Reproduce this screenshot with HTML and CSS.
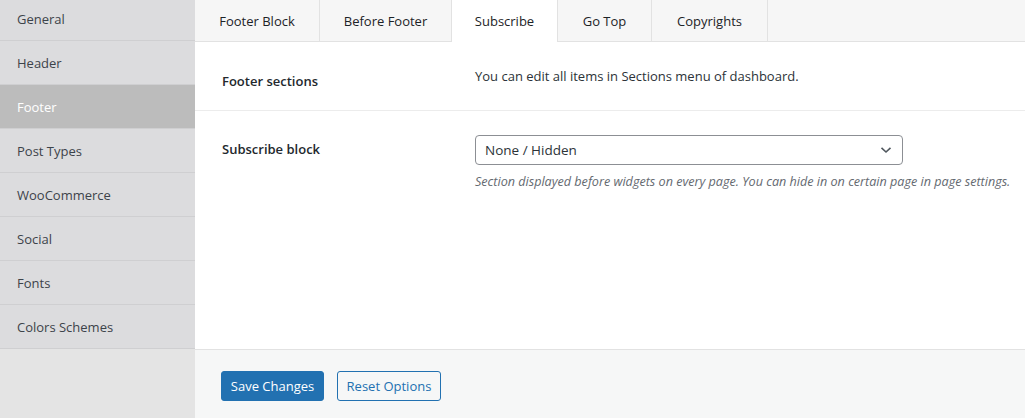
FILE: index.html
```html
<!DOCTYPE html>
<html>
<head>
<meta charset="utf-8">
<link rel="stylesheet" href="styles.css">
</head>
<body>
<div class="wrap">
  <aside class="sidebar">
    <ul class="menu">
      <li class="item first">General</li>
      <li class="item">Header</li>
      <li class="item active">Footer</li>
      <li class="item">Post Types</li>
      <li class="item">WooCommerce</li>
      <li class="item">Social</li>
      <li class="item">Fonts</li>
      <li class="item">Colors Schemes</li>
    </ul>
  </aside>
  <main class="main">
    <nav class="tabs">
      <div class="tab">Footer Block</div>
      <div class="tab">Before Footer</div>
      <div class="tab active">Subscribe</div>
      <div class="tab">Go Top</div>
      <div class="tab">Copyrights</div>
    </nav>
    <section class="content">
      <div class="row row-info">
        <div class="label label-info">Footer sections</div>
        <div class="value">You can edit all items in Sections menu of dashboard.</div>
      </div>
      <div class="row row-field">
        <div class="label label-field">Subscribe block</div>
        <div class="value">
          <div class="select">
            <span>None / Hidden</span>
            <svg class="chev" width="12" height="8" viewBox="0 0 12 8"><path d="M1.5 1.8 L6 6 L10.5 1.8" fill="none" stroke="#50575e" stroke-width="1.6"/></svg>
          </div>
          <p class="desc">Section displayed before widgets on every page. You can hide in on certain page in page settings.</p>
        </div>
      </div>
    </section>
    <footer class="actions">
      <button class="btn primary">Save Changes</button>
      <button class="btn secondary">Reset Options</button>
    </footer>
  </main>
</div>
</body>
</html>
```

FILE: styles.css
```css
* { box-sizing: border-box; }
html, body { margin: 0; padding: 0; }
body {
  font-family: "Open Sans", "Noto Sans", sans-serif;
  font-size: 13px;
  color: #1d2327;
  background: #e4e4e4;
  width: 1025px;
  height: 418px;
  overflow: hidden;
  white-space: nowrap;
}
.wrap { display: flex; height: 418px; }
.sidebar {
  width: 195px;
  flex: none;
  background: #e4e4e4;
}
.menu { list-style: none; margin: -2px 0 0; padding: 0; }
.item {
  height: 44px;
  display: flex;
  align-items: center;
  padding-left: 17px;
  background: #dcdcde;
  border-bottom: 1px solid #cfcfd1;
  color: #3c434a;
}
.item.first { height: 43px; }
.item.active { background: #bcbcbc; color: #fff; }
.main {
  flex: 1;
  display: flex;
  flex-direction: column;
  background: #fff;
}
.tabs {
  display: flex;
  height: 42px;
  background: #f6f6f6;
  border-bottom: 1px solid #e2e2e2;
}
.tab {
  height: 41px;
  display: flex;
  align-items: center;
  justify-content: center;
  border-right: 1px solid #e2e2e2;
  color: #1d2327;
}
.tab:nth-child(1) { width: 125px; }
.tab:nth-child(2) { width: 132px; }
.tab:nth-child(3) { width: 106px; }
.tab:nth-child(4) { width: 94px; }
.tab:nth-child(5) { width: 116px; }
.tab.active { background: #fff; height: 42px; margin-bottom: -1px; }
.content { flex: 1; }
.row { display: flex; }
.row-info {
  height: 69px;
  align-items: center;
  border-bottom: 1px solid #ececec;
}
.label {
  width: 280px;
  padding-left: 27px;
  font-weight: 600;
  color: #23282d;
}
.label-info { padding-top: 10px; }
.value { color: #2c3338; }
.row-field { padding-top: 24px; }
.label-field { padding-top: 5px; }
.select {
  width: 428px;
  height: 30px;
  border: 1px solid #8c8f94;
  border-radius: 4px;
  display: flex;
  align-items: center;
  justify-content: space-between;
  padding: 0 10px 0 9px;
  font-size: 13.5px;
  color: #2c3338;
}
.desc {
  margin: 8px 0 0;
  font-style: italic;
  font-size: 12.6px;
  color: #646970;
}
.actions {
  height: 69px;
  background: #f6f7f7;
  border-top: 1px solid #e2e2e2;
  display: flex;
  align-items: center;
  gap: 13px;
  padding: 3px 0 0 26px;
}
.btn {
  font-family: inherit;
  font-size: 13px;
  height: 30px;
  border-radius: 3px;
  padding: 0;
  white-space: nowrap;
  cursor: pointer;
}
.primary { background: #2271b1; border: 1px solid #2271b1; color: #fff; width: 103px; }
.secondary { background: #f6f7f7; border: 1px solid #2271b1; color: #2271b1; width: 104px; }
```
